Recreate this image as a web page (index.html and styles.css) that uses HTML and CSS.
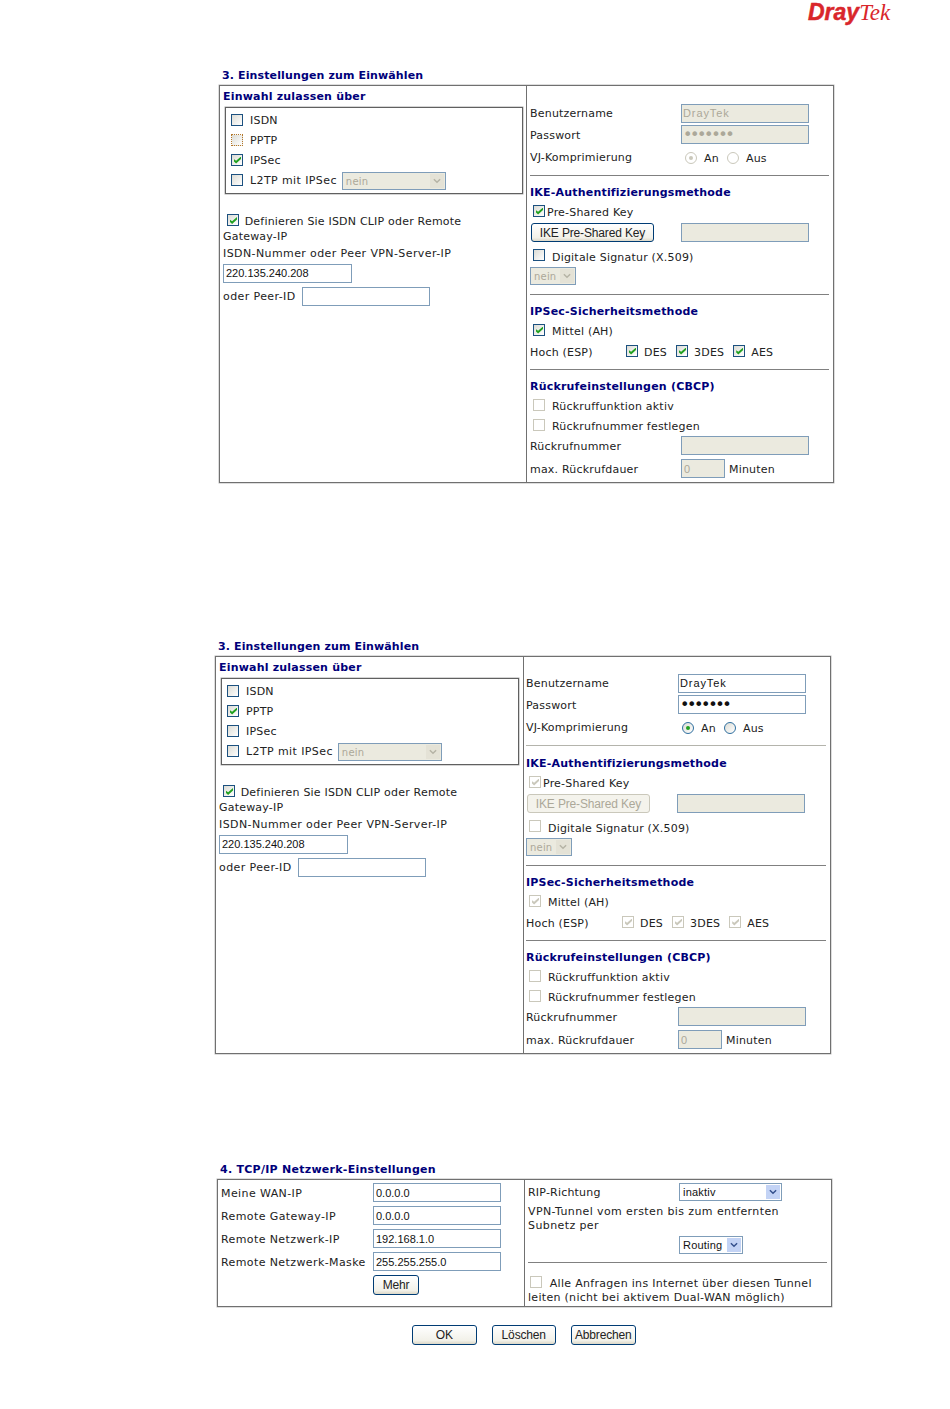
FILE: index.html
```html
<!DOCTYPE html>
<html lang="de">
<head>
<meta charset="utf-8">
<title>DrayTek</title>
<link rel="stylesheet" href="styles.css">
</head>
<body>
<header class="brand"><span class="dray">Dray</span><span class="tek">Tek</span></header>

<section class="sec sec-a">
  <h2 class="title">3. Einstellungen zum Einwählen</h2>
  <div class="panel">
    <div class="col col-left">
      <h3 class="head h-first">Einwahl zulassen über</h3>
      <div class="group">
        <label class="row g"><input type="checkbox" class="cb"><span class="t">ISDN</span></label>
        <label class="row g"><input type="checkbox" class="cb focus"><span class="t">PPTP</span></label>
        <label class="row g"><input type="checkbox" class="cb" checked><span class="t">IPSec</span></label>
        <label class="row g"><input type="checkbox" class="cb"><span class="t wide">L2TP mit IPSec</span><span class="select off sel-l2tp"><span class="val">nein</span><span class="arrow"><svg viewBox="0 0 9 6" class="chev"><path d="M1 1l3.5 3.5L8 1" /></svg></span></span></label>
      </div>
      <label class="line define"><input type="checkbox" class="cb inl" checked> Definieren Sie ISDN CLIP oder Remote Gateway-IP</label>
      <div class="row r-isdn wide">ISDN-Nummer oder Peer VPN-Server-IP</div>
      <div class="row r-ip"><input class="field f-ip" type="text" value="220.135.240.208"></div>
      <div class="row r-peer"><span class="peer-l wide">oder Peer-ID</span><input class="field" type="text"></div>
    </div>
    <div class="col col-right pad-a">
      <div class="row r22"><span class="lab">Benutzername</span><input class="field off f-name" type="text" value="DrayTek" disabled></div>
      <div class="row r21"><span class="lab">Passwort</span><input class="field off pw" type="password" value="1234567" disabled></div>
      <div class="row r23"><span class="lab">VJ-Komprimierung</span><span class="radio-wrap"><span class="radio off on"></span><span class="rt">An</span><span class="radio off"></span><span class="rt">Aus</span></span></div>
      <hr class="rule">
      <h3 class="head">IKE-Authentifizierungsmethode</h3>
      <label class="row r22"><input type="checkbox" class="cb near" checked><span>Pre-Shared Key</span></label>
      <div class="row r23 top"><button class="btn btn-ike" type="button">IKE Pre-Shared Key</button><input class="field off f-ike" type="text" disabled></div>
      <label class="row r21"><input type="checkbox" class="cb ind"><span>Digitale Signatur (X.509)</span></label>
      <div class="row r18"><span class="select off sel-nein"><span class="val">nein</span><span class="arrow"><svg viewBox="0 0 9 6" class="chev"><path d="M1 1l3.5 3.5L8 1" /></svg></span></span></div>
      <hr class="rule rule-b">
      <h3 class="head">IPSec-Sicherheitsmethode</h3>
      <label class="row r22"><input type="checkbox" class="cb ind" checked><span>Mittel (AH)</span></label>
      <div class="row r20"><span class="hoch">Hoch (ESP)</span>
        <input type="checkbox" class="cb" checked><span class="algo a1">DES</span>
        <input type="checkbox" class="cb" checked><span class="algo a2">3DES</span>
        <input type="checkbox" class="cb" checked><span class="algo">AES</span></div>
      <hr class="rule">
      <h3 class="head">Rückrufeinstellungen (CBCP)</h3>
      <label class="row r22"><input type="checkbox" class="cb ind" disabled><span>Rückruffunktion aktiv</span></label>
      <label class="row r19 fix"><input type="checkbox" class="cb ind" disabled><span>Rückrufnummer festlegen</span></label>
      <div class="row r23 last"><span class="lab">Rückrufnummer</span><input class="field off" type="text" disabled></div>
      <div class="row r23 last"><span class="lab">max. Rückrufdauer</span><input class="field off f-min" type="text" value="0" disabled><span class="unit">Minuten</span></div>
    </div>
  </div>
</section>

<section class="sec sec-b">
  <h2 class="title">3. Einstellungen zum Einwählen</h2>
  <div class="panel">
    <div class="col col-left">
      <h3 class="head h-first">Einwahl zulassen über</h3>
      <div class="group">
        <label class="row g"><input type="checkbox" class="cb"><span class="t">ISDN</span></label>
        <label class="row g"><input type="checkbox" class="cb" checked><span class="t">PPTP</span></label>
        <label class="row g"><input type="checkbox" class="cb"><span class="t">IPSec</span></label>
        <label class="row g"><input type="checkbox" class="cb"><span class="t wide">L2TP mit IPSec</span><span class="select off sel-l2tp"><span class="val">nein</span><span class="arrow"><svg viewBox="0 0 9 6" class="chev"><path d="M1 1l3.5 3.5L8 1" /></svg></span></span></label>
      </div>
      <label class="line define"><input type="checkbox" class="cb inl" checked> Definieren Sie ISDN CLIP oder Remote Gateway-IP</label>
      <div class="row r-isdn wide">ISDN-Nummer oder Peer VPN-Server-IP</div>
      <div class="row r-ip"><input class="field f-ip" type="text" value="220.135.240.208"></div>
      <div class="row r-peer"><span class="peer-l wide">oder Peer-ID</span><input class="field" type="text"></div>
    </div>
    <div class="col col-right pad-b">
      <div class="row r22"><span class="lab">Benutzername</span><input class="field f-name" type="text" value="DrayTek"></div>
      <div class="row r21"><span class="lab">Passwort</span><input class="field pw" type="password" value="1234567"></div>
      <div class="row r23"><span class="lab">VJ-Komprimierung</span><span class="radio-wrap"><span class="radio on"></span><span class="rt">An</span><span class="radio"></span><span class="rt">Aus</span></span></div>
      <hr class="rule rule-l">
      <h3 class="head">IKE-Authentifizierungsmethode</h3>
      <label class="row r22"><input type="checkbox" class="cb near" checked disabled><span>Pre-Shared Key</span></label>
      <div class="row r23 top"><button class="btn btn-ike" type="button" disabled>IKE Pre-Shared Key</button><input class="field off f-ike" type="text" disabled></div>
      <label class="row r21"><input type="checkbox" class="cb ind" disabled><span>Digitale Signatur (X.509)</span></label>
      <div class="row r18"><span class="select off sel-nein"><span class="val">nein</span><span class="arrow"><svg viewBox="0 0 9 6" class="chev"><path d="M1 1l3.5 3.5L8 1" /></svg></span></span></div>
      <hr class="rule rule-b">
      <h3 class="head">IPSec-Sicherheitsmethode</h3>
      <label class="row r22"><input type="checkbox" class="cb ind" checked disabled><span>Mittel (AH)</span></label>
      <div class="row r20"><span class="hoch">Hoch (ESP)</span>
        <input type="checkbox" class="cb" checked disabled><span class="algo a1">DES</span>
        <input type="checkbox" class="cb" checked disabled><span class="algo a2">3DES</span>
        <input type="checkbox" class="cb" checked disabled><span class="algo">AES</span></div>
      <hr class="rule">
      <h3 class="head">Rückrufeinstellungen (CBCP)</h3>
      <label class="row r22"><input type="checkbox" class="cb ind" disabled><span>Rückruffunktion aktiv</span></label>
      <label class="row r19 fix"><input type="checkbox" class="cb ind" disabled><span>Rückrufnummer festlegen</span></label>
      <div class="row r23 last"><span class="lab">Rückrufnummer</span><input class="field off" type="text" disabled></div>
      <div class="row r23 last"><span class="lab">max. Rückrufdauer</span><input class="field off f-min" type="text" value="0" disabled><span class="unit">Minuten</span></div>
    </div>
  </div>
</section>

<section class="sec sec-c">
  <h2 class="title">4. TCP/IP Netzwerk-Einstellungen</h2>
  <div class="panel">
    <div class="col col-left c-left">
      <div class="row r23"><span class="lab-c wide">Meine WAN-IP</span><input class="field" type="text" value="0.0.0.0"></div>
      <div class="row r23"><span class="lab-c wide">Remote Gateway-IP</span><input class="field" type="text" value="0.0.0.0"></div>
      <div class="row r23"><span class="lab-c wide">Remote Netzwerk-IP</span><input class="field" type="text" value="192.168.1.0"></div>
      <div class="row r23"><span class="lab-c wide">Remote Netzwerk-Maske</span><input class="field" type="text" value="255.255.255.0"></div>
      <div class="row r23"><span class="lab-c"></span><button class="btn btn-mehr" type="button">Mehr</button></div>
    </div>
    <div class="col col-right c-right">
      <div class="row r18"><span class="lab">RIP-Richtung</span><span class="select sel-rip"><span class="val">inaktiv</span><span class="arrow blue"><svg viewBox="0 0 9 6" class="chev"><path d="M1 1l3.5 3.5L8 1" /></svg></span></span></div>
      <p class="line vpn wide">VPN-Tunnel vom ersten bis zum entfernten Subnetz per</p>
      <div class="row r18"><span class="lab"></span><span class="select sel-route"><span class="val">Routing</span><span class="arrow blue"><svg viewBox="0 0 9 6" class="chev"><path d="M1 1l3.5 3.5L8 1" /></svg></span></span></div>
      <hr class="rule rule-c">
      <label class="line all"><input type="checkbox" class="cb inl" disabled> Alle Anfragen ins Internet über diesen Tunnel leiten (nicht bei aktivem Dual-WAN möglich)</label>
    </div>
  </div>
</section>

<div class="actions">
  <button class="btn act" type="button">OK</button>
  <button class="btn act" type="button">Löschen</button>
  <button class="btn act" type="button">Abbrechen</button>
</div>
</body>
</html>
```

FILE: styles.css
```css
* { box-sizing: border-box; }
html, body { margin: 0; padding: 0; }
body {
  width: 950px;
  height: 1409px;
  overflow: hidden;
  background: #fff;
  color: #222;
  font: 11px/14px "DejaVu Sans", Verdana, sans-serif;
  letter-spacing: .2px;
}
.wide { letter-spacing: .4px; }
.brand {
  height: 26px;
  padding-left: 808px;
  color: #d9262b;
  line-height: 25px;
  white-space: nowrap;
  letter-spacing: 0;
}
.dray { font: italic 700 23px/25px "Liberation Sans", sans-serif; -webkit-text-stroke: .5px #d9262b; }
.tek { font: italic 400 23px/25px "Liberation Serif", serif; }

.sec { width: 616px; }
.sec-a { margin: 41px 0 0 219px; }
.sec-b { margin: 155px 0 0 215px; }
.sec-c { margin: 107px 0 0 217px; }
.title {
  margin: 0;
  height: 18px;
  padding-left: 3px;
  color: #00007a;
  font: 700 11px/17px "DejaVu Sans", Verdana, sans-serif;
  letter-spacing: .13px;
}
.sec-c .title { letter-spacing: .27px; }
.panel {
  display: grid;
  grid-template-columns: 306px 1fr;
  border: 1px solid #707070;
  box-shadow: 0 0 0 .5px #bbb;
}
.sec-a .panel { height: 398px; width: 615px; }
.sec-b .panel { height: 398px; width: 616px; grid-template-columns: 307px 1fr; }
.sec-c .panel { height: 128px; width: 615px; }

.col { min-width: 0; }
.col-right { border-left: 1px solid #707070; padding-left: 3px; padding-right: 4px; }
.pad-a { padding-top: 16px; }
.pad-b { padding-top: 15px; padding-left: 2px; }
.col-left { padding: 0 3px; }

.head {
  margin: 0;
  height: 18px;
  color: #00007a;
  font: 700 11px/20px "DejaVu Sans", Verdana, sans-serif;
  letter-spacing: .2px;
}
.h-first { height: 21px; line-height: 21px; }

.row { display: flex; align-items: center; white-space: nowrap; }
.row .cb { margin-top: -3px; }
.col-right label.row > span, .lab, .lab-c, .hoch, .algo, .unit { padding-top: 2px; }
.col-right label.fix > span { padding-top: 0; }
.top { align-items: flex-start; }
.last { align-items: flex-start; }
.last .lab, .last .unit { padding-top: 0; line-height: 21px; }
.r18 { height: 18px; }
.r19 { height: 19px; }
.r20 { height: 20px; }
.r21 { height: 21px; }
.r22 { height: 22px; }
.r23 { height: 23px; }

.group {
  width: 298px;
  height: 87px;
  margin-left: 2px;
  padding: 3px 0 0 5px;
  border: 1px solid #606060;
  box-shadow: 0 0 0 .5px #aaa;
}
.g { height: 20px; }
.g .t { margin-left: 7px; }
.define { display: block; width: 280px; margin-top: 20px; height: 31px; line-height: 15px; }
.line { white-space: normal; }
.line .inl { margin: 0 2px 0 4px; vertical-align: -1px; }
.r-isdn { height: 17px; }
.r-ip { height: 23px; padding-bottom: 1px; }
.r-peer { height: 22px; }
.peer-l { width: 79px; padding-top: 2px; }

.lab { width: 151px; flex: none; }
.pad-b .lab { width: 152px; }
.lab-c { width: 152px; flex: none; }
.hoch { width: 96px; }
.algo { margin: 0 8px 0 6px; }
.a1 { margin-right: 9px; }
.a2 { margin-right: 9px; }
.unit { margin-left: 4px; }

.field {
  width: 128px;
  height: 19px;
  margin: 0;
  padding: 1px 2px;
  border: 1px solid #7f9db9;
  background: #fff;
  color: #111;
  font: 11px/15px "Liberation Sans", Arial, sans-serif;
  letter-spacing: 0;
  flex: none;
}
.f-ip { width: 129px; }
.f-name { letter-spacing: .9px; padding-left: 1px; }
.pw { font: 16px/15px "DejaVu Sans", sans-serif; letter-spacing: -2.4px; padding: 0 1px; }
.field.off, .select.off { background: #ebeadf; color: #aca899; }
.f-ike { margin-left: 27px; }
.f-min { width: 44px; }

.cb {
  appearance: none;
  position: relative;
  flex: none;
  width: 12px;
  height: 12px;
  margin: 0;
  border: 1px solid #1c5180;
  background: linear-gradient(135deg, #dcdcd5, #fff);
  vertical-align: middle;
}
.cb:checked::after {
  content: "";
  position: absolute;
  left: 2px;
  top: 2px;
  width: 7px;
  height: 7px;
  background: #21a121;
  clip-path: polygon(0 40%, 30% 60%, 100% 0, 100% 35%, 30% 100%, 0 70%);
}
.cb:disabled { border-color: #cac8bb; background: #fff; }
.cb:disabled:checked::after { background: #cac8bb; }
.focus { border: 1px dotted #b5782a; }
.near { margin: 0 2px 0 3px; }
.ind { margin: 0 7px 0 3px; }

.radio-wrap { display: inline-flex; align-items: center; padding-top: 2px; margin-left: 4px; }
.radio {
  position: relative;
  width: 12px;
  height: 12px;
  border: 1px solid #2f6f9f;
  border-radius: 50%;
  background: linear-gradient(135deg, #dcdcd5, #fff);
}
.radio.on::after {
  content: "";
  position: absolute;
  left: 3px;
  top: 3px;
  width: 4px;
  height: 4px;
  border-radius: 50%;
  background: #21a121;
}
.radio.off { border-color: #cac8bb; background: #fff; }
.radio.off.on::after { background: #cac8bb; }
.rt { margin: 0 8px 0 7px; padding-top: 2px; }

.select {
  display: inline-flex;
  align-items: center;
  justify-content: space-between;
  height: 18px;
  padding: 0 1px 0 3px;
  border: 1px solid #7f9db9;
  background: #fff;
  font: 11px/15px "Liberation Sans", Arial, sans-serif;
  color: #111;
}
.sel-l2tp { width: 104px; margin-left: 5px; font-family: "DejaVu Sans", sans-serif; font-size: 10px; }
.sel-nein { width: 46px; font-family: "DejaVu Sans", sans-serif; font-size: 10px; }
.sel-rip { width: 103px; }
.sel-route { width: 64px; }
.arrow {
  display: flex;
  align-items: center;
  justify-content: center;
  width: 14px;
  height: 14px;
  background: #e4e2d6;
}
.arrow.blue { background: #c3d3f5; }
.chev { width: 8px; height: 6px; fill: none; stroke: #b5b3a5; stroke-width: 1.6; }
.blue .chev { stroke: #34508c; }

.rule { height: 1px; margin: 7px 0; border: 0; background: #808080; }
.rule-b { margin-top: 9px; }
.rule-l { background: #b4b4ac; margin-bottom: 8px; }
.rule-c { margin: 8px 0 13px; }

.btn {
  margin: 0;
  padding: 0;
  border: 1px solid #003c74;
  border-radius: 3px;
  background: linear-gradient(#fff, #f2f1e9 80%, #dcd8c8);
  color: #222;
  font: 12px/16px "Liberation Sans", Arial, sans-serif;
  letter-spacing: -.15px;
  flex: none;
}
.btn:disabled { border-color: #cac8bb; color: #aca899; background: #f4f3ec; }
.btn-ike { width: 123px; height: 19px; margin-left: 1px; }
.btn-mehr { width: 46px; height: 20px; }

.c-left { padding: 1px 0 0 3px; }
.c-right { padding-top: 3px; padding-left: 3px; }
.vpn { margin: 4px 0 3px; width: 275px; }
.all { display: block; letter-spacing: .3px; }
.line .cb.inl:disabled { margin: 0 4px 0 2px; }

.actions {
  display: flex;
  gap: 15px;
  margin: 18px 0 0 412px;
}
.act { height: 20px; width: 64.5px; }
```
